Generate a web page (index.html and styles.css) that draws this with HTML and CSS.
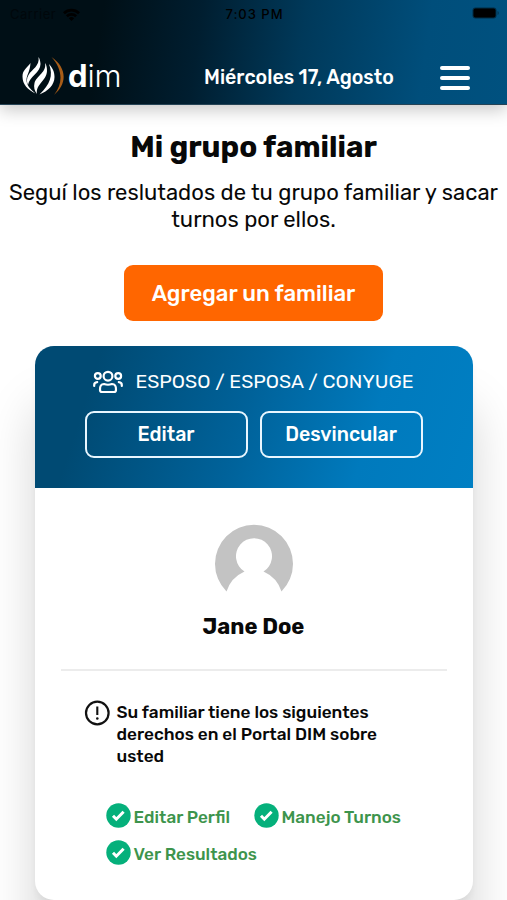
FILE: index.html
```html
<!DOCTYPE html>
<html lang="es">
<head>
<meta charset="utf-8">
<meta name="viewport" content="width=device-width, initial-scale=1">
<title>Mi grupo familiar</title>
<link rel="stylesheet" href="styles.css">
</head>
<body>
<header class="top">
  <div class="status">
    <div class="carrier"><span>Carrier</span>
      <svg width="17" height="13" viewBox="0 0 17 13"><path d="M0 4.2a12.500 12.500 0 0 1 17 0l-1.900 2a9.700 9.700 0 0 0-13.200 0zM2.900 7.200a8.200 8.200 0 0 1 11.200 0l-1.900 2a5.400 5.400 0 0 0-7.400 0zM5.800 10.200a4 4 0 0 1 5.400 0L8.500 13z"/></svg>
    </div>
    <span class="clock">7:03 PM</span>
    <svg class="battery" width="27" height="12" viewBox="0 0 27 12"><rect x=".5" y=".5" width="24" height="11" rx="3" fill="#002c45"/><rect x="1.500" y="1.500" width="22" height="9" rx="2" fill="#000"/><path d="M25.500 4v4q1.300-.5 1.300-2t-1.300-2" fill="#003452"/></svg>
  </div>
  <div class="nav">
    <div class="logo">
      <svg width="43" height="42" viewBox="0 0 43 42">
        <g fill="#fff">
          <path d="M8.500 8C5 13 .5 15 .5 21.500c0 8 5 13 13 17C8 34 4.500 30 4.500 25c0-5 3.500-8 4-17z"/>
          <path d="M16.500 2c1.500 9-6.500 12-10 18-2 3.500-2 7-.5 10 1.500-9 12.500-12 12.500-21-.2-3-.7-5-2-7z"/>
          <path d="M23 8c2 9-8.500 13-10.500 20-1 4 0 8 2.500 11-1.500-10 9.500-13 10-23 0-3.500-.5-6-2-8z"/>
          <path d="M27 9c4.500 12 1 20-9.500 30.500C26 36 32.500 30 32.500 22c0-5.500-2-9-5.500-13z"/>
        </g>
        <path d="M29.500 2c15.500 10.500 16 27 2.500 38 9.500-11.500 8.500-26-2.500-38z" fill="#a85d18"/>
      </svg>
      <span class="wordmark"><b>d</b><span>im</span></span>
    </div>
    <span class="date">Miércoles 17, Agosto</span>
    <div class="menu"><i></i><i></i><i></i></div>
  </div>
</header>
<main>
  <h1>Mi grupo familiar</h1>
  <p class="intro">Seguí los reslutados de tu grupo familiar y sacar<br>turnos por ellos.</p>
  <button class="add">Agregar un familiar</button>
  <section class="card">
    <div class="card-head">
      <div class="relation">
        <svg width="30" height="24" viewBox="0 0 30 24" fill="none" stroke="#fff" stroke-width="2.200" stroke-linecap="round"><circle cx="15" cy="6.200" r="4.400"/><circle cx="4.800" cy="6" r="2.900"/><circle cx="25.200" cy="6" r="2.900"/><path d="M1.200 16v-1q0-2.500 3-2.800M28.800 16v-1q0-2.500-3-2.800M7 20q-.3-6 4-6 4 1.500 8 0 4.300 0 4 6 0 2-2 2H9q-2 0-2-2z" stroke-linejoin="round"/></svg>
        <span>ESPOSO / ESPOSA / CONYUGE</span>
      </div>
      <div class="actions"><button>Editar</button><button>Desvincular</button></div>
    </div>
    <div class="profile">
      <svg width="80" height="68" viewBox="0 0 80 68"><path d="M12.500 67.500A39 39 0 1 1 67.500 67.500Q63 53.500 49.500 47.500A18 18 0 1 0 30.500 47.500Q17 53.500 12.500 67.500z" fill="#c3c3c3"/></svg>
      <h2>Jane Doe</h2>
    </div>
    <div class="notice">
      <svg width="26" height="26" viewBox="0 0 26 26"><circle cx="13.300" cy="13" r="11.300" fill="none" stroke="#111" stroke-width="2.200"/><path d="M13.300 6.500v8.500" stroke="#111" stroke-width="2.100"/><circle cx="13.300" cy="18.500" r="1.300" fill="#111"/></svg>
      <p>Su familiar tiene los siguientes<br>derechos en el Portal DIM sobre<br>usted</p>
    </div>
    <ul class="rights">
      <li><svg width="25" height="25" viewBox="0 0 25 25"><circle cx="12.500" cy="12.500" r="12.200" fill="#05b07b"/><path d="m7 12.800 3.300 3.400 7.300-7.400" fill="none" stroke="#fff" stroke-width="3"/></svg><span>Editar Perfil</span></li>
      <li><svg width="25" height="25" viewBox="0 0 25 25"><circle cx="12.500" cy="12.500" r="12.200" fill="#05b07b"/><path d="m7 12.800 3.300 3.400 7.300-7.400" fill="none" stroke="#fff" stroke-width="3"/></svg><span>Manejo Turnos</span></li>
      <li><svg width="25" height="25" viewBox="0 0 25 25"><circle cx="12.500" cy="12.500" r="12.200" fill="#05b07b"/><path d="m7 12.800 3.300 3.400 7.300-7.400" fill="none" stroke="#fff" stroke-width="3"/></svg><span>Ver Resultados</span></li>
    </ul>
  </section>
</main>
</body>
</html>
```
FILE: styles.css
```css
* { box-sizing: border-box; }
html, body { margin: 0; height: 900px; overflow: hidden; }
body { font-family: Rubik, Roboto, sans-serif; color: #080808; background: #fff; }
svg { display: block; flex: none; }
button { font: inherit; color: #fff; margin: 0; padding: 0; white-space: nowrap; }
h1, h2, p, ul { margin: 0; padding: 0; }
.top { height: 105px; background: linear-gradient(98deg, #000f16 20%, #001e30 39%, #00395a 59%, #004e7b 83%, #00517f 100%); box-shadow: 0 5px 16px rgba(0,0,0,.22); border-bottom: 1px solid #254355; }
.status { height: 28px; display: grid; grid-template-columns: 1fr auto 1fr; align-items: center; padding: 0 8px 0 10px; font: 500 13px Inter, sans-serif; color: #000; }
.carrier { display: flex; gap: 7px; align-items: center; font-weight: 400; color: #00070b; letter-spacing: .5px; }
.battery { justify-self: end; margin-top: -2px; }
.clock { letter-spacing: 1px; }
.nav { height: 76px; display: grid; grid-template-columns: 182px 236px 30px; padding: 0 0 0 22px; align-items: center; align-content: center; }
.logo { display: flex; align-items: center; height: 42px; gap: 3px; margin-top: 20px; }
.wordmark { display: flex; color: #fff; font: 300 31px/38px Inter, sans-serif; letter-spacing: -.1px; }
.wordmark b { font-weight: 700; }
.date { color: #fff; font-size: 19.6px; font-weight: 500; line-height: 24px; white-space: nowrap; margin-top: 23px; }
.menu { display: grid; gap: 6px; margin-top: 23px; }
.menu i { height: 4px; background: #fff; border-radius: 2px; }
main { display: flex; flex-direction: column; align-items: center; }
h1 { font-size: 29.6px; line-height: 34px; margin-top: 25px; font-weight: 700; }
.intro { font-size: 22.05px; line-height: 27px; margin-top: 15px; text-align: center; white-space: nowrap; }
.add { margin-top: 32px; width: 259px; height: 56px; background: #ff6600; border: 0; border-radius: 9px; font-size: 22.1px; font-weight: 500; }
.card { margin-top: 25px; width: 438px; height: 554px; border-radius: 19px; background: #fff; box-shadow: 0 60px 50px rgba(0,0,0,.17), 0 5px 6px rgba(0,0,0,.04); overflow: hidden; }
.card-head { height: 142px; background: linear-gradient(108deg, #004a73 14%, #00629a 48%, #007abd 75%, #007fc3 100%); padding-top: 23px; }
.relation { display: flex; justify-content: center; gap: 12px; align-items: center; color: #fff; font-size: 19.5px; line-height: 26px; height: 26px; }
.relation svg { margin-top: -1px; }
.actions { display: flex; justify-content: center; gap: 12px; margin-top: 16px; }
.actions button { width: 163px; height: 47px; background: transparent; border: 2px solid #e8f6ff; border-radius: 9px; font-size: 19.6px; font-weight: 500; }
.profile { margin: 0 26px; height: 183px; border-bottom: 2px solid #ececec; display: flex; flex-direction: column; align-items: center; padding-top: 36px; }
h2 { font-size: 22px; line-height: 28px; margin-top: 21px; }
.notice { display: flex; gap: 7px; padding: 29px 0 0 49px; }
.notice p { font-size: 17.2px; font-weight: 500; line-height: 22px; padding: 1px 0; white-space: nowrap; }
.rights { display: grid; grid-template-columns: 148px 180px; row-gap: 11px; margin: 35px 0 0 71px; list-style: none; }
.rights li { display: flex; gap: 3px; color: #3d944c; font-size: 17.1px; font-weight: 500; line-height: 25px; height: 26px; white-space: nowrap; }
.rights span { padding-top: 2px; }
```
